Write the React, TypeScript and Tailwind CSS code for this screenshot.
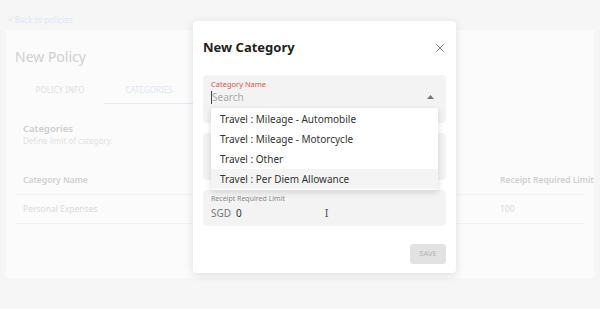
import { X } from "lucide-react";

const options = [
  "Travel : Mileage - Automobile",
  "Travel : Mileage - Motorcycle",
  "Travel : Other",
  "Travel : Per Diem Allowance",
];

export default function App() {
  return (
    <div className="relative h-[309px] w-[600px] overflow-hidden bg-[#f6f6f6] font-['Noto_Sans',sans-serif]">
      {/* page behind the dialog, washed out */}
      <div className="px-[6px] pt-[14px]">
        <div className="pl-[2px] text-[8px] leading-[12px] text-[#dfe5f2]">&lt; Back to policies</div>
        <div className="mt-[4px] h-[248px] w-[588px] bg-[#fbfbfb] pt-[17px]">
          <div className="pl-[9px] text-[14px] leading-[20px] text-[#cfcfcf]">New Policy</div>
          <div className="mt-[17px] flex pl-[10px]">
            <div className="w-[88px] border-b border-transparent pb-[7px] text-center text-[8px] leading-[12px] text-[#dedede]">POLICY INFO</div>
            <div className="w-[90px] border-b-[1.5px] border-[#e3e7f6] pb-[7px] text-center text-[8px] leading-[12px] text-[#e0e4f3]">CATEGORIES</div>
          </div>
          <div className="mt-[18px] pl-[17px]">
            <div className="text-[9.5px] font-semibold leading-[13px] text-[#cdcdcd]">Categories</div>
            <div className="text-[8px] leading-[11px] text-[#e2e2e2]">Define limit of category.</div>
          </div>
          <div className="mx-[10px] mt-[21px] flex h-[28px] items-center whitespace-nowrap border-b border-[#f3f3f3] pl-[7px] text-[8.5px] font-semibold text-[#d0d0d0]">
            <span className="w-[477px] shrink-0">Category Name</span>
            <span>Receipt Required Limit</span>
          </div>
          <div className="mx-[10px] flex h-[29px] items-center border-b border-[#f3f3f3] pl-[7px] text-[8.5px] text-[#dadada]">
            <span className="w-[477px] shrink-0">Personal Expenses</span>
            <span>100</span>
          </div>
        </div>
      </div>

      {/* dialog */}
      <div className="absolute left-[193px] top-[21px] flex h-[252px] w-[263px] flex-col rounded-[4px] bg-white px-[10px] shadow-[0_2px_10px_rgba(0,0,0,0.12)]">
        <div className="mt-[17px] flex h-[20px] items-center justify-between">
          <span className="text-[13px] font-bold text-[#222]">New Category</span>
          <X size={14} strokeWidth={1.4} className="-mr-[1px] text-[#666]" />
        </div>

        <div className="relative mt-[17px] h-[48px] rounded-[4px] bg-[#f3f3f3] px-[8px] pt-[4px]">
          <div className="text-[7.5px] leading-[10px] text-[#d9534f]">Category Name</div>
          <div className="mt-[1px] flex h-[14px] items-center justify-between">
            <span className="border-l border-[#444] text-[10px] leading-[13px] text-[#aaa]">Search</span>
            <svg width="7" height="4" viewBox="0 0 7 4" className="mr-[4px]">
              <path d="M0 4 L3.5 0 L7 4 Z" fill="#777" />
            </svg>
          </div>
          <div className="absolute left-[8px] top-[33px] z-10 w-[227px] rounded-[2px] bg-white py-[1px] shadow-[0_2px_6px_rgba(0,0,0,0.15)]">
            {options.map((o, i) => (
              <div
                key={o}
                className={
                  i === 3
                    ? "flex h-[20px] items-center bg-[#f4f4f4] pl-[9px] text-[10px] text-[#333]"
                    : "flex h-[20px] items-center pl-[9px] text-[10px] text-[#333]"
                }
              >
                {o}
              </div>
            ))}
          </div>
        </div>

        <div className="mt-[10px] h-[47px] rounded-[4px] bg-[#f3f3f3]" />

        <div className="relative mt-[10px] h-[36px] rounded-[4px] bg-[#f3f3f3] px-[8px] pt-[4px]">
          <div className="text-[7px] leading-[10px] text-[#888]">Receipt Required Limit</div>
          <div className="mt-[2px] flex items-center text-[10px] leading-[14px]">
            <span className="text-[#777]">SGD</span>
            <span className="ml-[5px] text-[#333]">0</span>
            <span className="ml-[83px] text-[11px] leading-[12px] text-[#555]">I</span>
          </div>
        </div>

        <div className="mt-[18px] flex justify-end">
          <div className="flex h-[20px] w-[36px] items-center justify-center rounded-[3px] bg-[#e2e2e2] text-[7.5px] text-[#b4b4b4]">SAVE</div>
        </div>
      </div>
    </div>
  );
}
